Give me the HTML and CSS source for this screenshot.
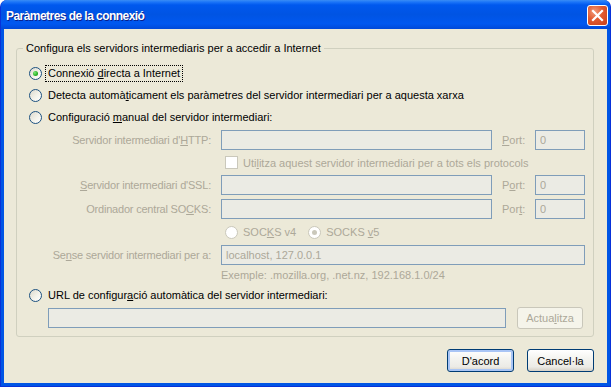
FILE: index.html
```html
<!DOCTYPE html>
<html>
<head>
  <meta charset="UTF-8">
  <title>Paràmetres de la connexió</title>
  <link rel="stylesheet" href="styles.css">
</head>
<body>
<div class="window">
  <div class="titlebar">
    <span class="title">Paràmetres de la connexió</span>
    <span class="close">
      <svg width="19" height="19" viewBox="0 0 19 19"><path d="M5 5 L14 14 M14 5 L5 14" stroke="#fff" stroke-width="2.2" stroke-linecap="square"/></svg>
    </span>
  </div>

  <div class="client">
    <fieldset class="group">
      <legend>Configura els servidors intermediaris per a accedir a Internet</legend>
      <div class="group-body">
        <div class="option"><span class="radio checked"></span><span class="focus">Connexió <u>d</u>irecta a Internet</span></div>
        <div class="option"><span class="radio"></span><span>Detecta automà<u>t</u>icament els paràmetres del servidor intermediari per a aquesta xarxa</span></div>
        <div class="option"><span class="radio"></span><span>Configuració <u>m</u>anual del servidor intermediari:</span></div>

        <div class="manual">
          <span class="lbl">Servidor intermediari d'<u>H</u>TTP:</span>
          <input class="field main" type="text" disabled>
          <span class="lbl port"><u>P</u>ort:</span>
          <input class="field" type="text" value="0" disabled>

          <div class="check-row"><span class="checkbox"></span><span>Uti<u>l</u>itza aquest servidor intermediari per a tots els protocols</span></div>

          <span class="lbl"><u>S</u>ervidor intermediari d'SSL:</span>
          <input class="field main" type="text" disabled>
          <span class="lbl port">P<u>o</u>rt:</span>
          <input class="field" type="text" value="0" disabled>

          <span class="lbl">Ordinador central SO<u>C</u>KS:</span>
          <input class="field main" type="text" disabled>
          <span class="lbl port">Por<u>t</u>:</span>
          <input class="field" type="text" value="0" disabled>

          <div class="socks-row">
            <span class="radio off"></span><span>SOC<u>K</u>S v4</span>
            <span class="radio off checked v5"></span><span>SOCKS <u>v</u>5</span>
          </div>

          <span class="lbl">Se<u>n</u>se servidor intermediari per a:</span>
          <input class="field span" type="text" value="localhost, 127.0.0.1" disabled>
          <span class="hint">Exemple: .mozilla.org, .net.nz, 192.168.1.0/24</span>
        </div>

        <div class="option url-option"><span class="radio"></span><span>URL de configur<u>a</u>ció automàtica del servidor intermediari:</span></div>
        <div class="url-row">
          <input class="field url" type="text" disabled>
          <button class="btn reload" disabled>Actua<u>l</u>itza</button>
        </div>
      </div>
    </fieldset>

    <div class="actions">
      <button class="btn default">D'acord</button>
      <button class="btn">Cancel·la</button>
    </div>
  </div>
</div>
</body>
</html>
```

FILE: styles.css
```css
* {
  box-sizing: border-box;
}

body {
  margin: 0;
  background: #fff;
  font-family: "Liberation Sans", Arial, sans-serif;
  font-size: 11px;
  color: #000;
}

.window {
  width: 611px;
  height: 387px;
  display: flex;
  flex-direction: column;
  background: #0055e5;
  border: 1px solid #0831d9;
  border-top: none;
  border-radius: 7px 7px 0 0;
  overflow: hidden;
}

.titlebar {
  height: 29px;
  flex: none;
  display: flex;
  align-items: center;
  justify-content: space-between;
  padding: 2px 3px 0 6px;
  margin: 0 -1px;
  background: linear-gradient(to bottom, #3a8cf5 0, #1c75f8 2px, #0058ee 5px, #0054e3 50%, #0058f0 82%, #0049d8 100%);
}

.title {
  color: #fff;
  font-weight: bold;
  font-size: 12px;
  letter-spacing: -0.55px;
  text-shadow: 1px 1px 0 #0a1e8a;
}

.close {
  width: 21px;
  height: 21px;
  display: flex;
  align-items: center;
  justify-content: center;
  border: 1px solid #fff;
  border-radius: 3px;
  background: radial-gradient(circle at 35% 30%, #f29b7a 0, #e0592f 45%, #c8401a 100%);
}

.client {
  flex: 1;
  margin: 0 3px 3px;
  background: #ece9d8;
  padding: 13px 13px 0 12px;
}

.group {
  margin: 0;
  padding: 0;
  min-width: 0;
  border: 1px solid #d0d0bf;
  border-radius: 3px;
}

.group legend {
  margin-left: 6px;
  padding: 0 3px;
  line-height: 13px;
}

.group-body {
  padding: 7px 0 7px 12px;
}

.option {
  height: 22px;
  display: flex;
  align-items: center;
}

.radio {
  width: 13px;
  height: 13px;
  flex: none;
  display: grid;
  place-items: center;
  margin-right: 6px;
  border: 1px solid #1c5180;
  border-radius: 50%;
  background: linear-gradient(135deg, #dcd9cd 0%, #f3f2ea 55%, #fff 100%);
}

.radio.checked::after {
  content: "";
  width: 5px;
  height: 5px;
  border-radius: 50%;
  background: radial-gradient(circle at 35% 35%, #7ce878 0, #2db52a 55%, #138a10 100%);
}

.radio.off {
  border-color: #cac8bb;
  background: #fff;
  margin-right: 5px;
}

.radio.off.checked::after {
  background: #cac8bb;
}

.focus {
  margin-left: -3px;
  padding: 1px 2px;
  line-height: 13px;
  border: 1px dotted #000;
}

.manual {
  display: grid;
  grid-template-columns: 192px 281px 33px 50px;
  grid-template-rows: 20px 17px 20px 20px 18px 20px 13px;
  row-gap: 4px;
  margin-top: 2px;
  color: #aca899;
}

.lbl {
  align-self: center;
  text-align: right;
  padding-right: 10px;
  letter-spacing: -0.2px;
  white-space: nowrap;
}

.lbl.port {
  text-align: left;
  padding-right: 0;
  letter-spacing: 0;
}

.field {
  height: 20px;
  margin: 0;
  padding: 0 4px;
  border: 1px solid #7f9db9;
  background: #ebebe4;
  font: inherit;
  color: #aca899;
}

.field.main {
  width: 271px;
}

.field.span {
  grid-column: 2 / -1;
}

.check-row,
.socks-row {
  grid-column: 2 / -1;
  display: flex;
  align-items: center;
  padding-left: 4px;
}

.checkbox {
  width: 13px;
  height: 13px;
  margin-right: 5px;
  border: 1px solid #cac8bb;
  background: #fff;
}

.radio.v5 {
  margin-left: 12px;
}

.hint {
  grid-column: 2 / -1;
  align-self: center;
  line-height: 13px;
}

.url-option {
  margin-top: 2px;
}

.url-row {
  height: 22px;
  margin-top: 1px;
  display: flex;
  align-items: center;
  padding-left: 19px;
}

.field.url {
  width: 458px;
  margin-right: 11px;
}

.btn {
  height: 23px;
  width: 67px;
  padding: 0;
  font: inherit;
  color: #000;
  border: 1px solid #003c74;
  border-radius: 3px;
  background: linear-gradient(to bottom, #fff 0%, #f4f4f0 40%, #ecebe6 80%, #d6d0c5 100%);
}

.btn.default {
  box-shadow: inset 0 0 0 2px #a9c5f5;
}

.btn:disabled {
  color: #aca899;
  border-color: #c9c7ba;
  background: #f5f4ea;
}

.btn.reload {
  width: 66px;
  height: 22px;
}

.actions {
  display: flex;
  justify-content: flex-end;
  gap: 13px;
  margin-top: 12px;
}
```
